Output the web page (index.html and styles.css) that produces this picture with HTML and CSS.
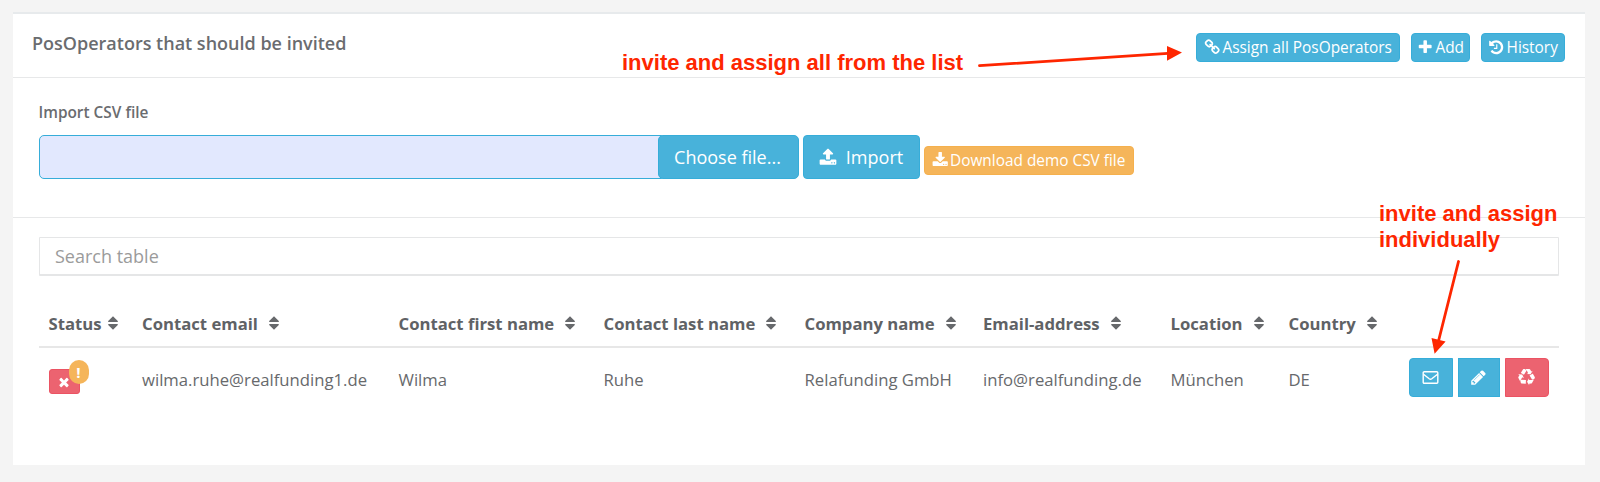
FILE: index.html
```
<!DOCTYPE html>
<html lang="en">
<head>
<meta charset="utf-8">
<title>PosOperators</title>
<link rel="stylesheet" href="styles.css">
</head>
<body>
<svg class="sprite" aria-hidden="true">
  <symbol id="link" viewBox="0 0 1792 1792"><path d="M1520 1216q0-40-28-68l-208-208q-28-28-68-28-42 0-72 32 3 3 19 18.500t21.500 21.500 15 19 13 25.500 3.500 27.500q0 40-28 68t-68 28q-15 0-27.500-3.500t-25.500-13-19-15-21.500-21.500-18.500-19q-33 31-33 73 0 40 28 68l206 207q27 27 68 27 40 0 68-26l147-146q28-28 28-67zm-703-705q0-40-28-68l-206-207q-28-28-68-28-39 0-68 27l-147 146q-28 28-28 67 0 40 28 68l208 208q27 27 68 27 42 0 72-31-3-3-19-18.500t-21.500-21.500-15-19-13-25.500-3.500-27.500q0-40 28-68t68-28q15 0 27.500 3.500t25.500 13 19 15 21.500 21.500 18.500 19q33-31 33-73zm895 705q0 120-85 203l-147 146q-83 83-203 83-121 0-204-85l-206-207q-83-83-83-203 0-123 88-209l-88-88q-86 88-208 88-120 0-204-84l-208-208q-84-84-84-204t85-203l147-146q83-83 203-83 121 0 204 85l206 207q83 83 83 203 0 123-88 209l88 88q86-88 208-88 120 0 204 84l208 208q84 84 84 204z"/></symbol>
  <symbol id="plus" viewBox="0 0 1792 1792"><path d="M1600 736v192q0 40-28 68t-68 28h-416v416q0 40-28 68t-68 28h-192q-40 0-68-28t-28-68v-416h-416q-40 0-68-28t-28-68v-192q0-40 28-68t68-28h416v-416q0-40 28-68t68-28h192q40 0 68 28t28 68v416h416q40 0 68 28t28 68z"/></symbol>
  <symbol id="history" viewBox="0 0 1792 1792"><path d="M1664 896q0 156-61 298t-164 245-245 164-298 61q-172 0-327-72.500t-264-204.500q-7-10-6.500-22.500t8.500-20.500l137-138q10-9 25-9 16 2 23 12 73 95 179 147t225 52q104 0 198.500-40.500t163.500-109.500 109.500-163.500 40.500-198.500-40.500-198.500-109.500-163.500-163.500-109.500-198.500-40.500q-98 0-188 35.500t-160 101.500l137 138q31 30 14 69-17 40-59 40h-448q-26 0-45-19t-19-45v-448q0-42 40-59 39-17 69 14l130 129q107-101 244.500-156.500t284.500-55.500q156 0 298 61t245 164 164 245 61 298zm-640-288v448q0 14-9 23t-23 9h-320q-14 0-23-9t-9-23v-64q0-14 9-23t23-9h224v-352q0-14 9-23t23-9h64q14 0 23 9t9 23z"/></symbol>
  <symbol id="upload" viewBox="0 0 1792 1792"><path d="M1344 1472q0-26-19-45t-45-19-45 19-19 45 19 45 45 19 45-19 19-45zm256 0q0-26-19-45t-45-19-45 19-19 45 19 45 45 19 45-19 19-45zm128-224v320q0 40-28 68t-68 28h-1472q-40 0-68-28t-28-68v-320q0-40 28-68t68-28h427q21 56 70.500 92t110.500 36h256q61 0 110.500-36t70.500-92h427q40 0 68 28t28 68zm-325-648q-17 40-59 40h-256v448q0 26-19 45t-45 19h-256q-26 0-45-19t-19-45v-448h-256q-42 0-59-40-17-39 14-69l448-448q18-19 45-19t45 19l448 448q31 30 14 69z"/></symbol>
  <symbol id="download" viewBox="0 0 1792 1792"><path d="M1344 1344q0-26-19-45t-45-19-45 19-19 45 19 45 45 19 45-19 19-45zm256 0q0-26-19-45t-45-19-45 19-19 45 19 45 45 19 45-19 19-45zm128-224v320q0 40-28 68t-68 28h-1472q-40 0-68-28t-28-68v-320q0-40 28-68t68-28h465l135 136q58 56 136 56t136-56l136-136h464q40 0 68 28t28 68zm-325-569q17 41-14 70l-448 448q-18 19-45 19t-45-19l-448-448q-31-29-14-70 17-39 59-39h256v-448q0-26 19-45t45-19h256q26 0 45 19t19 45v448h256q42 0 59 39z"/></symbol>
  <symbol id="times" viewBox="0 0 1792 1792"><path d="M1490 1322q0 40-28 68l-136 136q-28 28-68 28t-68-28l-294-294-294 294q-28 28-68 28t-68-28l-136-136q-28-28-28-68t28-68l294-294-294-294q-28-28-28-68t28-68l136-136q28-28 68-28t68 28l294 294 294-294q28-28 68-28t68 28l136 136q28 28 28 68t-28 68l-294 294 294 294q28 28 28 68z"/></symbol>
  <symbol id="envelope" viewBox="0 0 17 17"><rect x="1.200" y="2.700" width="14.600" height="11.600" rx="1" fill="none" stroke="currentColor" stroke-width="1.400"/><path d="M1.500 5.200L7.200 9.800q1.300 1 2.600 0L15.500 5.200" fill="none" stroke="currentColor" stroke-width="1.400"/></symbol>
  <symbol id="pencil" viewBox="0 0 1792 1792"><path d="M491 1536l91-91-235-235-91 91v107h128v128h107zm523-928q0-22-22-22-10 0-17 7l-542 542q-7 7-7 17 0 22 22 22 10 0 17-7l542-542q7-7 7-17zm-54-192l416 416-832 832h-416v-416zm683 96q0 53-37 90l-166 166-416-416 166-165q36-38 90-38 53 0 91 38l235 234q37 39 37 91z"/></symbol>
  <symbol id="recycle" viewBox="0 0 1792 1792"><path d="M836 1169l-15 368-2 22-420-29q-36-3-67-31.500t-47-65.500q-11-27-14.500-55t4-65 12-55 21.500-64 19-53q78 12 509 28zm-387-586l180 379-147-92q-63 72-111.500 144.500t-72.500 125-39.500 94.500-18.500 63l-4 21-190-357q-17-26-18-56t6-47l8-18q35-63 114-188l-140-86zm1231 517l-188 359q-12 29-36.500 46.500t-43.500 20.500l-18 4q-71 7-219 12l8 164-230-367 211-362 7 173q170 16 283 5t170-33zm-785-924q-47 63-265 435l-317-187-19-12 225-356q20-31 60-45t80-10q24 2 48.500 12t42 21 41.500 33 36 34.500 36 39.500 32 35zm655 307l212 363q18 37 12.500 76t-27.500 74q-13 20-33 37t-38 28-48.500 22-47 16-51.500 14-46 12q-34-72-265-436l313-195zm-143-226l142-83-220 373-419-20 151-86q-34-89-75-166t-75.500-123.500-64.500-80-47-46.500l-17-13 405 1q31-3 58 10.500t39 28.500l11 15q39 61 112 190z"/></symbol>
  <symbol id="sort" viewBox="0 0 10 14"><path d="M5 0.200L9.800 5.100q.3.900-.6.900H.8q-.9 0-.6-.9zM5 13.800L.2 8.900Q-.1 8 .8 8h8.400q.9 0 .6.900z"/></symbol>
</svg>
<main class="panel">
  <header class="panel-head">
    <h1 class="title">PosOperators that should be invited</h1>
    <div class="tools">
      <a class="btn small assign"><svg class="icon"><use href="#link"/></svg><span>Assign all PosOperators</span></a>
      <a class="btn small add"><svg class="icon"><use href="#plus"/></svg><span>Add</span></a>
      <a class="btn small history"><svg class="icon"><use href="#history"/></svg><span>History</span></a>
    </div>
  </header>
  <section class="import">
    <div class="label">Import CSV file</div>
    <div class="import-row">
      <div class="file"><div class="file-name"></div><a class="btn choose">Choose file...</a></div>
      <a class="btn upload"><svg class="icon"><use href="#upload"/></svg><span>Import</span></a>
      <a class="btn small demo"><svg class="icon"><use href="#download"/></svg><span>Download demo CSV file</span></a>
    </div>
  </section>
  <section class="list">
    <div class="search">Search table</div>
    <div class="row head">
      <div class="th tight">Status<svg class="sort"><use href="#sort"/></svg></div>
      <div class="th">Contact email<svg class="sort"><use href="#sort"/></svg></div>
      <div class="th">Contact first name<svg class="sort"><use href="#sort"/></svg></div>
      <div class="th">Contact last name<svg class="sort"><use href="#sort"/></svg></div>
      <div class="th">Company name<svg class="sort"><use href="#sort"/></svg></div>
      <div class="th">Email-address<svg class="sort"><use href="#sort"/></svg></div>
      <div class="th">Location<svg class="sort"><use href="#sort"/></svg></div>
      <div class="th">Country<svg class="sort"><use href="#sort"/></svg></div>
    </div>
    <div class="row body">
      <div><div class="status"><svg class="icon"><use href="#times"/></svg><span class="alert">!</span></div></div>
      <div class="td">wilma.ruhe@realfunding1.de</div>
      <div class="td">Wilma</div>
      <div class="td">Ruhe</div>
      <div class="td">Relafunding GmbH</div>
      <div class="td">info@realfunding.de</div>
      <div class="td">München</div>
      <div class="td">DE</div>
      <div class="actions">
        <a class="btn act first"><svg class="icon"><use href="#envelope"/></svg></a>
        <a class="btn act mid"><svg class="icon"><use href="#pencil"/></svg></a>
        <a class="btn act last"><svg class="icon"><use href="#recycle"/></svg></a>
      </div>
    </div>
  </section>
</main>
<div class="note note-all">invite and assign all from the list</div>
<div class="note note-one">invite and assign<br>individually</div>
<svg class="arrows" viewBox="0 0 1600 482">
  <path class="shaft" d="M979.500 65.700L1168 53.300M1458.500 261.500L1438.500 341"/>
  <path class="tip" d="M1182 52.500L1167 46V60.700zM1434.600 353.700L1431.500 338L1445.600 341.500z"/>
</svg>
</body>
</html>
```
FILE: styles.css
```
* { box-sizing: border-box; }
body {
  margin: 0;
  height: 482px;
  overflow: hidden;
  padding: 12px 15px 17px 13px;
  background: #f4f4f4;
  color: #67696c;
  font: 16.700px/24px "Open Sans", "Noto Sans", sans-serif;
}
.sprite { position: absolute; width: 0; height: 0; }
.icon { width: 15.400px; height: 15.400px; fill: currentColor; flex: none; }
.panel { height: 453px; background: #fff; border-top: 2px solid #e7eaec; }
.panel-head {
  display: flex;
  justify-content: space-between;
  height: 64px;
  padding: 19px 20px 0 19px;
  border-bottom: 1px solid #e7e8e9;
}
.title { margin: -2px 0 0; font-size: 18px; line-height: 24px; font-weight: 600; color: #6a6c6f; }
.tools { display: flex; gap: 11px; }
.btn {
  display: flex;
  align-items: center;
  justify-content: center;
  background: #48b2da;
  border: 1px solid #36add9;
  border-radius: 4px;
  color: #fff;
  white-space: nowrap;
}
.small { height: 29px; gap: 2px; font-size: 15.400px; }
.small .icon { width: 16.400px; height: 16.400px; }
.assign { width: 204px; }
.add { width: 59px; }
.history { width: 84px; }
.import { height: 140px; padding: 23px 26px 0 25.500px; border-bottom: 1px solid #e7e8e9; }
.label { height: 34px; font-weight: 600; font-size: 15.400px; color: #6a6c6f; }
.import-row { display: flex; }
.file { display: flex; width: 760px; margin-right: 4px; }
.file-name {
  flex: 1;
  height: 44px;
  margin-right: -4px;
  background: #e2e8fe;
  border: 1px solid #36add9;
  border-radius: 5px 0 0 5px;
}
.choose { width: 141px; height: 44px; padding-right: 1px; font-size: 18px; border-radius: 5px; }
.upload { width: 117px; height: 44px; gap: 9px; font-size: 18px; }
.upload .icon { width: 18px; height: 18px; }
.demo { width: 210px; margin: 11px 0 0 4px; background: #f5b55a; border-color: #f5b04d; }
.list { padding: 19px 26px 0; }
.search {
  height: 39px;
  padding: 0 15px;
  border: 1px solid #e5e6e7;
  border-bottom-width: 2px;
  border-radius: 1px;
  color: #9b9b9b;
  font-size: 18px;
  line-height: 37px;
}
.row {
  display: grid;
  grid-template-columns: 93.500px 256.500px 205px 201px 178.500px 187.500px 118px 120px 140px;
  padding-left: 9.500px;
}
.head { height: 72px; padding-top: 36px; border-bottom: 2px solid #e7e7e7; color: #5f6265; }
.th { display: flex; gap: 11px; font-weight: 700; white-space: nowrap; }
.tight { gap: 6px; }
.sort { width: 10px; height: 14px; margin-top: 4px; fill: #67696c; }
.body { padding-top: 10px; }
.td { padding-top: 10px; white-space: nowrap; }
.status {
  position: relative;
  display: flex;
  align-items: center;
  justify-content: center;
  width: 31px;
  height: 25px;
  margin-top: 11px;
  background: #ec6370;
  border: 1px solid #eb5363;
  border-radius: 3px;
  color: #fff;
}
.status .icon { width: 14px; height: 14px; }
.alert {
  position: absolute;
  left: 19px;
  top: -10px;
  width: 20px;
  height: 24px;
  border-radius: 10px;
  background: #f5b55a;
  font-weight: 700;
  font-size: 15px;
  line-height: 24px;
  text-align: center;
}
.actions { display: flex; gap: 5px; }
.act { width: 44px; height: 39px; }
.act .icon { width: 17px; height: 17px; }
.first { border-radius: 4px 0 0 4px; }
.mid { width: 42px; border-radius: 0; }
.last { background: #ec6370; border-color: #eb5363; border-radius: 0 4px 4px 0; }
.last .icon { margin-right: 1px; }
.note {
  position: absolute;
  color: #fe2600;
  font: 700 22px/26px "Liberation Sans", Arial, sans-serif;
  white-space: nowrap;
}
.note-all { left: 622px; top: 50px; }
.note-one { left: 1379px; top: 201px; }
.arrows { position: absolute; left: 0; top: 0; width: 1600px; height: 482px; }
.shaft { stroke: #fe2600; stroke-width: 2.800; fill: none; stroke-linecap: round; }
.tip { fill: #fe2600; }
```
